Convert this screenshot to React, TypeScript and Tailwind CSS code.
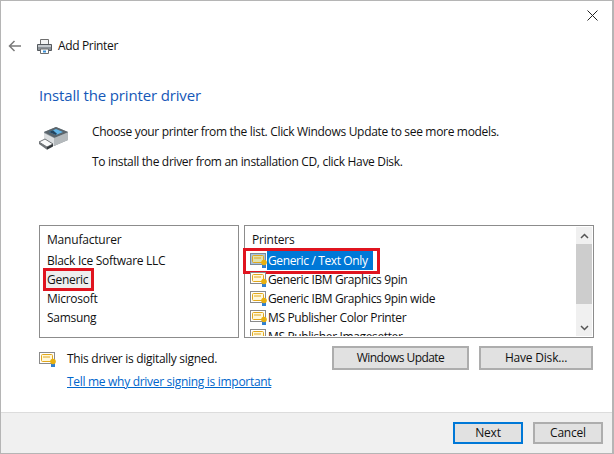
const FONT = "font-['Open_Sans','Noto_Sans',sans-serif]";

const PRINTERS = [
    'Generic / Text Only',
    'Generic IBM Graphics 9pin',
    'Generic IBM Graphics 9pin wide',
    'MS Publisher Color Printer',
    'MS Publisher Imagesetter',
];

const MANUFACTURERS = ['Black Ice Software LLC', 'Generic', 'Microsoft', 'Samsung'];

function CertIcon({ faded }: { faded?: boolean }) {
    return (
        <svg width="17" height="15" viewBox="0 0 17 15" className="shrink-0">
            <rect x="0.5" y="0.5" width="15" height="11" fill={faded ? '#a9c4e0' : '#fff'} stroke={faded ? '#7d8a96' : '#8a8a8a'} />
            <rect x="2.5" y="2.5" width="11" height="7" rx="1" fill={faded ? '#dfe2b0' : '#fff8dc'} stroke="#e2a81c" />
            <line x1="4" y1="5" x2="11" y2="5" stroke="#e2a81c" />
            <rect x="12" y="11" width="4" height="4" fill="#2f7fd0" />
            <circle cx="14" cy="9.500" r="2.800" fill="#e8b010" />
        </svg>
    );
}

function SmallPrinter() {
    return (
        <svg width="17" height="17" viewBox="0 0 17 17" className="shrink-0">
            <path d="M4.500 1.500h8v5h-8z" fill="#f4f4f4" stroke="#6e6e6e" />
            <path d="M1.500 6.500h14v6h-14z" fill="#8d9399" stroke="#54595e" />
            <path d="M2 7h13v2H2z" fill="#c4c8cc" />
            <path d="M4.500 11h8v4.500h-8z" fill="#fff" stroke="#6e6e6e" />
            <rect x="7" y="12.500" width="3" height="2" fill="#3b8fd4" />
        </svg>
    );
}

function LargePrinter() {
    return (
        <svg width="30" height="24" viewBox="0 0 30 24" className="shrink-0">
            <path d="M5 6 17 1l12 5v8L15 20 5 14z" fill="#8a9298" />
            <path d="M5 6 17 1l12 5-13 6z" fill="#5b656c" />
            <path d="M10 6 17 3l7 3-7 3z" fill="#62b4e6" />
            <path d="M10 6 14 4.300l4 3.400-1 1.300z" fill="#24445e" />
            <path d="M5 7v7l10 6v-8z" fill="#dcdfe1" />
            <path d="M15 12 29 6.500V14L15 20z" fill="#b4b9bc" />
            <path d="M0 16 6 13 14 18 8 21z" fill="#fafafa" stroke="#4e5357" strokeWidth="0.800" />
            <path d="M8 21 14 18v2.500L8 23.800z" fill="#33383c" />
            <path d="M0 16v2l8 5.800V21z" fill="#6f7478" />
        </svg>
    );
}

export default function App() {
    return (
        <div className={`${FONT} flex h-[454px] w-[614px] flex-col border border-r-2 border-[#b5b5b5] bg-white text-[12px] leading-[16px] text-[#111]`}>
            <div className="flex h-[411px] flex-col">
                <div className="flex justify-end pt-[9px] pr-[14px]">
                    <svg width="11" height="11" viewBox="0 0 11 11" stroke="#222" strokeWidth="1">
                        <path d="M0.500 0.500l10 10M10.500 0.500l-10 10" />
                    </svg>
                </div>

                <div className="mt-[15px] flex h-[20px] items-center pl-[7px]">
                    <svg width="14" height="12" viewBox="0 0 14 12" fill="none" stroke="#7a7a7a" strokeWidth="1.500">
                        <path d="M13 6H1.500M6.500 1 1.500 6l5 5" />
                    </svg>
                    <div className="ml-[14px]">
                        <SmallPrinter />
                    </div>
                    <span className="ml-[5px] tracking-[-0.35px]">Add Printer</span>
                </div>

                <h1 className="mt-[29px] ml-[38px] text-[15px] leading-[20px] font-normal tracking-[-0.15px] text-[#1558b8]">
                    Install the printer driver
                </h1>

                <div className="mt-[19px] ml-[38px] flex">
                    <div className="mt-[2px] w-[53px]">
                        <LargePrinter />
                    </div>
                    <div className="tracking-[-0.32px]">
                        <p>Choose your printer from the list. Click Windows Update to see more models.</p>
                        <p className="mt-[14px]">To install the driver from an installation CD, click Have Disk.</p>
                    </div>
                </div>

                <div className="mt-[55px] ml-[38px] flex h-[113px] gap-[5px]">
                    <div className="w-[200px] border border-[#8c8c8c] pt-[6px] pl-[7px] tracking-[-0.28px]">
                        <div className="h-[18px] tracking-[-0.2px]">Manufacturer</div>
                        <ul className="mt-[1px]">
                            {MANUFACTURERS.map((m) => (
                                <li key={m} className="flex h-[19px] items-center">
                                    <span
                                        className={
                                            m === 'Generic'
                                                ? '-ml-[1px] bg-[#eeeeee] py-[0.5px] pr-[3px] pl-[1px] outline-3 outline-[#e0141f]'
                                                : ''
                                        }
                                    >
                                        {m}
                                    </span>
                                </li>
                            ))}
                        </ul>
                    </div>

                    <div className="flex w-[350px] border border-[#8c8c8c] py-[1px] pl-[7px] tracking-[-0.37px]">
                        <div className="min-w-0 flex-1 overflow-y-clip pt-[5px]">
                            <div className="h-[18px] tracking-[-0.2px]">Printers</div>
                            <ul className="mt-[1px] -ml-[2px]">
                                {PRINTERS.map((p, i) => (
                                    <li key={p} className="flex h-[19px] items-center gap-[1px]">
                                        {i === 0 ? (
                                            <span className="-ml-[4px] flex h-[20px] items-center pr-[4px] pl-[4px] outline-3 outline-[#e0141f]">
                                                <CertIcon faded />
                                                <span className="flex h-[19px] items-center bg-[#0078d7] pr-[5px] pl-[1px] text-white">
                                                    {p}
                                                </span>
                                            </span>
                                        ) : (
                                            <>
                                                <CertIcon />
                                                <span>{p}</span>
                                            </>
                                        )}
                                    </li>
                                ))}
                            </ul>
                        </div>
                        <div className="mr-[1px] flex w-[16px] flex-col bg-[#f0f0f0]">
                            <div className="flex h-[17px] items-center justify-center">
                                <svg width="9" height="6" viewBox="0 0 9 6" fill="none" stroke="#555" strokeWidth="1.500">
                                    <path d="M1 5l3.500-3.500L8 5" />
                                </svg>
                            </div>
                            <div className="h-[60px] bg-[#cdcdcd]" />
                            <div className="flex-1" />
                            <div className="flex h-[17px] items-center justify-center">
                                <svg width="9" height="6" viewBox="0 0 9 6" fill="none" stroke="#555" strokeWidth="1.500">
                                    <path d="M1 1l3.500 3.500L8 1" />
                                </svg>
                            </div>
                        </div>
                    </div>
                </div>

                <div className="mt-[8px] ml-[38px] flex tracking-[-0.3px]">
                    <div className="flex-1">
                        <div className="mt-[5px] flex items-center gap-[11px]">
                            <CertIcon />
                            <span>This driver is digitally signed.</span>
                        </div>
                        <a className="mt-[7px] ml-[28px] block text-[#0066cc] underline">
                            Tell me why driver signing is important
                        </a>
                    </div>
                    <div className="mr-[19px] flex gap-[10px]">
                        <button className="h-[24px] w-[137px] border-2 border-[#adadad] bg-[#e1e1e1] tracking-[-0.55px]">
                            Windows Update
                        </button>
                        <button className="h-[24px] w-[114px] border-2 border-[#adadad] bg-[#e1e1e1] tracking-[-0.2px]">
                            Have Disk...
                        </button>
                    </div>
                </div>
            </div>

            <div className="flex flex-1 items-start justify-end gap-[10px] border-t border-[#dcdcdc] bg-[#f0f0f0] pt-[9px] pr-[9px] tracking-[-0.2px]">
                <button className="h-[22px] w-[70px] border-2 border-[#0078d7] bg-[#e1e1e1]">Next</button>
                <button className="h-[22px] w-[70px] border-2 border-[#adadad] bg-[#e1e1e1]">Cancel</button>
            </div>
        </div>
    );
}
